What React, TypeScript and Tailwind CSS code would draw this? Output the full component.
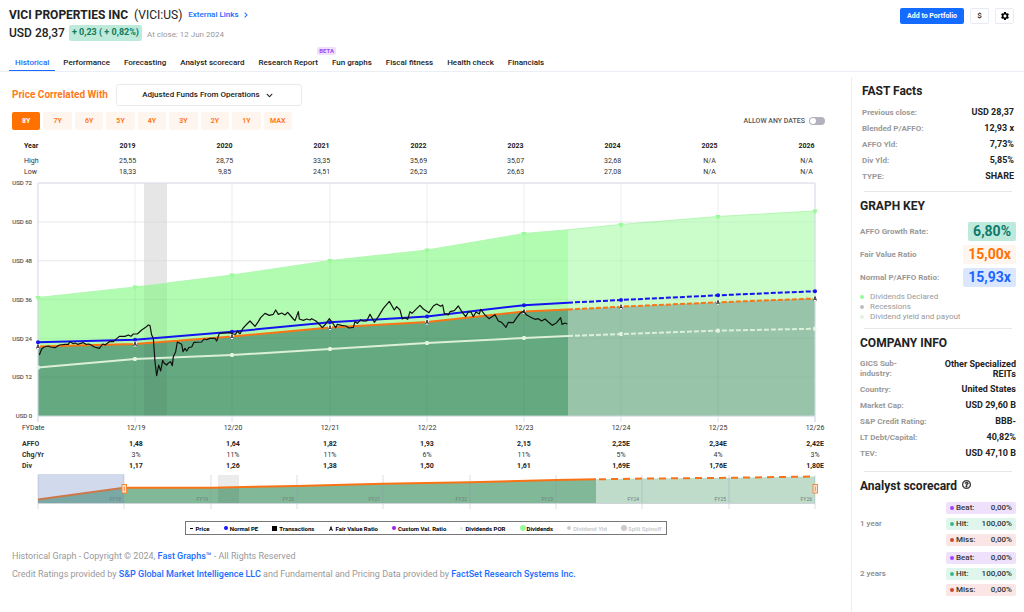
import React, { useState } from 'react';
import { MdSettings } from 'react-icons/md';
import { FaChevronDown, FaChevronRight, FaRegQuestionCircle } from 'react-icons/fa';

const tabs = [
  'Historical',
  'Performance',
  'Forecasting',
  'Analyst scorecard',
  'Research Report',
  'Fun graphs',
  'Fiscal fitness',
  'Health check',
  'Financials',
];

const periods = ['8Y', '7Y', '6Y', '5Y', '4Y', '3Y', '2Y', '1Y', 'MAX'];

const priceTable = [
  { label: 'Year', values: ['2019', '2020', '2021', '2022', '2023', '2024', '2025', '2026'] },
  { label: 'High', values: ['25,55', '28,75', '33,35', '35,69', '35,07', '32,68', 'N/A', 'N/A'] },
  { label: 'Low', values: ['18,33', '9,85', '24,51', '26,23', '26,63', '27,08', 'N/A', 'N/A'] },
];

const fiscalTable = [
  { label: 'FYDate', bold: false, values: ['12/19', '12/20', '12/21', '12/22', '12/23', '12/24', '12/25', '12/26'] },
  { label: 'AFFO', bold: true, values: ['1,48', '1,64', '1,82', '1,93', '2,15', '2,25E', '2,34E', '2,42E'] },
  { label: 'Chg/Yr', bold: false, values: ['3%', '11%', '11%', '6%', '11%', '5%', '4%', '3%'] },
  { label: 'Div', bold: true, values: ['1,17', '1,26', '1,38', '1,50', '1,61', '1,69E', '1,76E', '1,80E'] },
];

const facts = [
  ['Previous close:', 'USD 28,37'],
  ['Blended P/AFFO:', '12,93 x'],
  ['AFFO Yld:', '7,73%'],
  ['Div Yld:', '5,85%'],
  ['TYPE:', 'SHARE'],
];

const companyInfo = [
  ['Country:', 'United States'],
  ['Market Cap:', 'USD 29,60 B'],
  ['S&P Credit Rating:', 'BBB-'],
  ['LT Debt/Capital:', '40,82%'],
  ['TEV:', 'USD 47,10 B'],
];

const graphKey = [
  { label: 'AFFO Growth Rate:', value: '6,80%', style: 'bg-[#bdeadb] text-[#0f7a6c]' },
  { label: 'Fair Value Ratio', value: '15,00x', style: 'bg-[#fff5ef] text-[#ff7200]' },
  { label: 'Normal P/AFFO Ratio:', value: '15,93x', style: 'bg-[#dbe7ff] text-[#1a66ff]' },
];

const keyDots = [
  { label: 'Dividends Declared', dot: 'bg-[#98fb98]' },
  { label: 'Recessions', dot: 'bg-[#bdbdbd]' },
  { label: 'Dividend yield and payout', dot: 'bg-[#e3f3e0]' },
];

const scores = [
  { label: 'Beat:', value: '0,00%', dot: 'bg-[#9b42ff]', bg: 'bg-[#efe1fb]' },
  { label: 'Hit:', value: '100,00%', dot: 'bg-[#37b98b]', bg: 'bg-[#e0f5ec]' },
  { label: 'Miss:', value: '0,00%', dot: 'bg-[#c94a2a]', bg: 'bg-[#f9e6e5]' },
];

// chart geometry, in svg user units
const X = [38, 135, 232, 330, 427, 524, 568, 621, 718, 815];
const dividends = [297.5, 287, 275, 260.5, 250, 233.5, 229.8, 224.5, 216.5, 211];
const normalPe = [342.3, 339.7, 331.7, 322.3, 316.5, 305.2, 302.7, 300, 295.3, 291.2];
const fairValue = [346.5, 344, 336.5, 327.5, 322, 311.5, 309.5, 306.7, 302.3, 298.5];
const payout = [367.5, 359, 355, 349, 343, 338, 336, 334, 330.7, 328.7];
const TODAY = 6;

const price1 =
  '118,660 125,642 132,636 145,633 152,636 165,638 178,630 195,628 205,628 210,620 220,626 225,624 233,628 240,626 250,623 258,628 267,627 275,631 283,636 298,640 308,627 315,630 322,625 330,619 340,620 350,611 358,604 375,604 385,600 393,604 400,597 412,597 425,585 437,577 445,570 450,572 455,600 460,610 465,680 470,722 476,690 482,708 488,676 492,684 500,690 505,684 512,680 517,692 520,665 527,650 532,621 545,628 549,650 555,640 560,648 567,637 575,636 582,622 605,621 612,612 620,614 630,610 645,610 650,618 658,595 690,593 700,597 707,598 712,588 720,597';
const price2 =
  '0,252 8,236 18,225 30,213 45,229 55,215 62,203 75,190 88,196 100,193 107,180 115,193 125,189 135,195 143,187 150,195 160,207 165,212 175,185 178,207 190,211 200,207 210,210 215,206 228,213 240,225 247,233 257,222 268,206 280,222 287,233 292,223 305,226 318,228 327,234 340,232 345,215 352,220 362,209 370,213 380,213 390,193 403,217 415,200 430,175 448,154 463,180 470,170 480,180 487,207 495,203 503,208 510,185 516,190 530,176 540,166 550,177 567,188 580,168 590,162 602,169 608,165 613,190 625,195 630,185 643,182 655,168 665,184 677,200 685,186 693,186 700,200 708,186 718,192 722,178 735,195 747,206 765,194 775,213 785,217 798,232 805,217 820,218 828,206 840,190 850,184 860,195 875,203 885,208 895,206 905,213 915,207 925,216 937,226 950,218 962,203 966,223 975,219 982,222';

const navX = [38, 124, 211, 297, 383, 470, 556, 596, 642, 729, 815];
const navY = [499.5, 487.7, 487.7, 486, 483.8, 482.3, 480, 479.3, 478.6, 477.8, 476.5];
const navTicks = [38, 124, 211, 297, 383, 470, 556, 642, 729, 815];

function line(xs: number[], ys: number[], from: number, to: number) {
  return xs
    .slice(from, to + 1)
    .map((x, i) => `${x},${ys[from + i]}`)
    .join(' ');
}

function area(xs: number[], ys: number[], from: number, to: number, base: number) {
  return `${line(xs, ys, from, to)} ${xs[to]},${base} ${xs[from]},${base}`;
}

function HistoryChart() {
  const years = X.filter((_, i) => i !== TODAY);
  const last = X.length - 1;
  return (
    <svg viewBox="0 177 851 245" className="block w-full" role="img" aria-label="Historical graph">
      {[0, 1, 2, 3, 4, 5, 6].map((i) => (
        <g key={i}>
          <line x1="38" x2="815" y1={416 - i * 38.8} y2={416 - i * 38.8} stroke="#f0f0f0" />
          <text x="32" y={418.2 - i * 38.8} textAnchor="end" fontSize="6" fill="#555" stroke="#555" strokeWidth="0.15">
            USD {i * 12}
          </text>
        </g>
      ))}
      {years.map((x) => (
        <line key={x} x1={x} x2={x} y1="183" y2="416" stroke="#ededf0" />
      ))}
      <rect x="144" y="183" width="23" height="233" fill="#e6e6e6" />

      <polygon points={area(X, dividends, 0, TODAY, 416)} fill="#b1fcb1" />
      <polygon points={area(X, dividends, TODAY, last, 416)} fill="#cbfdcb" />
      <polygon points={area(X, fairValue, 0, TODAY, 416)} fill="#65a981" />
      <polygon points={area(X, fairValue, TODAY, last, 416)} fill="#98c5aa" />
      <polyline points={line(X, dividends, 0, last)} fill="none" stroke="#b4f7b4" />
      <polygon points="144,286 167,283.2 167,416 144,416" fill="#000" opacity="0.05" />
      {[1, 2, 3, 4, 5].map((i) => (
        <line key={i} x1="38" x2="815" y1={416 - i * 38.8} y2={416 - i * 38.8} stroke="#000" opacity="0.03" />
      ))}
      {years.map((x, i) => (
        <line key={x} x1={x} x2={x} y1={[297, 287, 275, 260, 250, 233, 224, 216, 211][i]} y2="416" stroke="#000" opacity="0.04" />
      ))}

      <path d="M38 422V183H815V422" fill="none" stroke="#d9dcec" />
      <path d="M38 416H815" stroke="#c9d6dc" />
      {years.map((x) => (
        <line key={x} x1={x} x2={x} y1="417" y2="422" stroke="#dcdff0" />
      ))}

      <g fill="none" strokeWidth="2">
        <polyline points={line(X, payout, 0, TODAY)} stroke="#dcefd9" />
        <polyline points={line(X, payout, TODAY, last)} stroke="#dcefd9" strokeDasharray="5 2" />
        <polyline points={line(X, fairValue, 0, TODAY)} stroke="#f97516" />
        <polyline points={line(X, fairValue, TODAY, last)} stroke="#f97516" strokeDasharray="5 2" />
        <polyline points={line(X, normalPe, 0, TODAY)} stroke="#1414f0" />
        <polyline points={line(X, normalPe, TODAY, last)} stroke="#1414f0" strokeDasharray="5 2" />
      </g>
      {X.map((x, i) =>
        i === TODAY ? null : (
          <g key={x}>
            <path d={`M${x - 2.5} ${dividends[i] - 1.5}h5l-1.5 4h-2z`} fill="#98fb98" />
            <circle cx={x} cy={normalPe[i]} r="2" fill="#1414f0" />
            <rect x={x - 1.5} y={payout[i] - 2} width="3" height="4" fill="#e6f5e3" />
            <rect x={x - 2} y={fairValue[i] - 2.5} width="4" height="5" rx="1" fill="#fff" opacity="0.9" />
            <path
              d={`M${x - 1.5} ${fairValue[i] + 2}L${x} ${fairValue[i] - 2}L${x + 1.5} ${fairValue[i] + 2}M${x - 1} ${fairValue[i] + 0.8}h2`}
              fill="none"
              stroke="#222"
              strokeWidth="0.9"
            />
          </g>
        ),
      )}
      <g fill="none" stroke="#111" strokeWidth="3.6" strokeLinejoin="round">
        <polyline points={price1} transform="translate(0 135) scale(0.33333)" />
        <polyline points={price2} transform="translate(240 250) scale(0.33333)" />
      </g>
    </svg>
  );
}

function Handle({ x }: { x: number }) {
  return (
    <g>
      <rect x={x - 2} y="484.5" width="4.5" height="8.5" fill="#ffe3cc" stroke="#f58a3c" />
      <path d={`M${x + 0.3} 486.5v4.5`} stroke="#f58a3c" />
    </g>
  );
}

function Navigator() {
  return (
    <svg viewBox="0 473 851 36" className="block w-full" role="img" aria-label="Range navigator">
      <rect x="218" y="475" width="21" height="28" fill="#ebebeb" />
      <polygon points={area(navX, navY, 0, 7, 503)} fill="#81b898" />
      <polygon points={area(navX, navY, 7, 10, 503)} fill="#bfdccb" />
      <rect x="218" y="487" width="21" height="16" fill="#000" opacity="0.07" />
      {navTicks.map((x) => (
        <line key={x} x1={x} x2={x} y1="475" y2="509" stroke="#8f8fb0" opacity="0.3" />
      ))}
      <line x1="38" x2="815" y1="503.5" y2="503.5" stroke="#cfd3da" />
      {navTicks.slice(1).map((x, i) => (
        <text key={x} x={x - 3} y="500.7" textAnchor="end" fontSize="5" fill="#6f7f78">
          FY{18 + i}
        </text>
      ))}
      <polyline points={line(navX, navY, 0, 7)} fill="none" stroke="#f97316" strokeWidth="2" />
      <polyline points={line(navX, navY, 7, 10)} fill="none" stroke="#f97316" strokeWidth="2" strokeDasharray="7 5" strokeDashoffset="-3" />
      <rect x="38" y="474" width="86" height="29" fill="#6685c2" opacity="0.3" />
      <Handle x={124} />
      <Handle x={815} />
    </svg>
  );
}

function Legend() {
  return (
    <ul className="mx-auto mt-3 flex h-[14px] w-[482px] items-center justify-between border border-[#777] px-1 text-[6px] font-bold text-black">
      <li className="flex items-center gap-[3px]"><span className="h-px w-[3px] bg-black" />Price</li>
      <li className="flex items-center gap-[2px]"><span className="size-1 rounded-full bg-[#1414ff]" />Normal PE</li>
      <li className="flex items-center gap-[2px]"><span className="size-[5px] bg-black" />Transactions</li>
      <li className="flex items-center gap-[3px]">
        <svg viewBox="0 0 6 8" className="h-[5px] w-1" fill="none" stroke="#000" strokeWidth="1.4"><path d="M.7 8L3 1L5.3 8M1.5 5.5H4.5" /></svg>
        Fair Value Ratio
      </li>
      <li className="flex items-center gap-[2px]"><span className="size-1 rounded-full bg-[#a21cf0]" />Custom Val. Ratio</li>
      <li className="flex items-center gap-[2px]"><span className="size-[3px] rounded-full bg-[#d9efd6]" />Dividends POR</li>
      <li className="flex items-center gap-px"><span className="size-[6px] rounded-full bg-[#98fb98]" />Dividends</li>
      <li className="flex items-center gap-[2px] text-[#ccc]"><span className="size-1 rounded-full bg-[#ccc]" />Dividend Yld</li>
      <li className="flex items-center gap-px text-[#ccc]"><span className="size-[6px] rounded-full bg-[#ccc]" />Split Spinoff</li>
    </ul>
  );
}

function InfoRow({ label, value }: { label: string; value: string }) {
  return (
    <div className="flex h-4 items-center justify-between font-bold">
      <dt className="text-[#999]">{label}</dt>
      <dd className="text-[9px] text-[#222]">{value}</dd>
    </div>
  );
}

export default function App() {
  const [tab, setTab] = useState('Historical');
  const [period, setPeriod] = useState('8Y');

  return (
    <div className="flex min-h-screen flex-col bg-white font-['Roboto',sans-serif] text-[#222]">
      {/* Header */}
      <header className="border-b border-[#eceef6]">
        <div className="flex items-start justify-between pt-[7px] pr-[10px] pl-[9px]">
          <div>
            <div className="flex h-4 items-center">
              <h1 className="text-[12px] font-bold">VICI PROPERTIES INC</h1>
              <span className="ml-[6px] text-[12px]">(VICI:US)</span>
              <a href="#links" className="ml-[6px] flex items-center gap-1 text-[8px] font-medium text-[#1a6bff]">
                External Links <FaChevronRight className="size-[6px]" />
              </a>
            </div>
            <div className="mt-[2px] flex h-4 items-center">
              <span className="text-[12px] font-medium">USD 28,37</span>
              <span className="ml-1 flex h-4 items-center rounded-[2px] bg-[#bdeadb] px-[3px] text-[9px] font-bold text-[#0f7a5c]">
                + 0,23 ( + 0,82%)
              </span>
              <span className="ml-[5px] pt-1 text-[8px] text-[#999]">At close: 12 Jun 2024</span>
            </div>
          </div>
          <div className="mt-px flex gap-[6px]">
            <button className="h-4 rounded-[2px] bg-[#146bff] px-[7px] text-[7px] font-bold text-white">Add to Portfolio</button>
            <button aria-label="Currency" className="h-4 w-[19px] rounded-[2px] border border-[#e8eaf4] text-[8px] font-medium">$</button>
            <button aria-label="Settings" className="flex h-4 w-[19px] items-center justify-center rounded-[2px] border border-[#e8eaf4] text-black">
              <MdSettings className="size-[10px]" />
            </button>
          </div>
        </div>
        <nav className="mt-[14px] flex gap-[2px] pl-[9px]">
          {tabs.map((t) => (
            <button
              key={t}
              onClick={() => setTab(t)}
              className={`relative h-4 border-b px-[6px] text-[8px] font-medium ${
                t === tab ? 'border-[#1a6bff] text-[#1a6bff]' : 'border-transparent'
              }`}
            >
              {t}
              {t === 'Research Report' && (
                <span className="absolute -top-2 -right-3 rounded-[2px] bg-[#efe0fc] px-[2px] text-[6px] leading-[8px] font-bold text-[#a24bf5]">
                  BETA
                </span>
              )}
            </button>
          ))}
        </nav>
      </header>

      <div className="flex flex-1">
        {/* Graph */}
        <main className="min-w-0 flex-1 pt-2">
          <div className="flex h-[29px] items-center gap-2 pl-3">
            <label htmlFor="metric" className="text-[10px] font-bold text-[#ff7a1a]">Price Correlated With</label>
            <div className="relative">
              <select
                id="metric"
                className="block h-[22px] w-[186px] appearance-none rounded-[3px] border border-[#e8eaf0] bg-white pr-4 text-center text-[8px] font-medium"
              >
                <option>Adjusted Funds From Operations</option>
              </select>
              <FaChevronDown className="pointer-events-none absolute top-2 right-[29px] size-[7px]" />
            </div>
          </div>
          <div className="mt-[3px] flex items-center justify-between pr-[26px] pl-3">
            <div className="grid w-[280px] grid-cols-9 gap-[3px]">
              {periods.map((p) => (
                <button
                  key={p}
                  onClick={() => setPeriod(p)}
                  className={`h-[18px] rounded-[2px] text-[7px] font-bold ${
                    p === period ? 'bg-[#ff7200] text-white' : 'bg-[#fff5ef] text-[#ff7a1a]'
                  }`}
                >
                  {p}
                </button>
              ))}
            </div>
            <label className="flex items-center gap-1 text-[7px] font-medium text-[#555]">
              ALLOW ANY DATES
              <input
                type="checkbox"
                className="flex h-2 w-4 appearance-none items-center rounded-full bg-[#b3b1bd] px-px before:size-[6px] before:rounded-full before:bg-white checked:justify-end"
              />
            </label>
          </div>

          <div className="mt-[11px] pr-9 pl-6">
            <table className="w-full table-fixed text-[7px] leading-[10px] text-[#333]">
              <colgroup>
                <col className="w-[15px]" />
              </colgroup>
              <tbody>
                {priceTable.map((row, i) => (
                  <tr key={row.label} className={i === 0 ? 'h-[14px] align-top font-bold text-[#222]' : 'h-[11px]'}>
                    <th scope="row" className={`text-left whitespace-nowrap ${i === 0 ? 'font-bold' : 'font-normal'}`}>{row.label}</th>
                    {row.values.map((v, j) => (
                      <td key={j} className="text-right">
                        <span className="inline-block w-[17px] text-center whitespace-nowrap">{v}</span>
                      </td>
                    ))}
                  </tr>
                ))}
              </tbody>
            </table>
          </div>

          <HistoryChart />

          <div className="mt-px pr-[26px] pl-[22px]">
            <table className="w-full table-fixed text-[7px] leading-[10px] text-[#333]">
              <colgroup>
                <col className="w-[27px]" />
              </colgroup>
              <tbody>
                {fiscalTable.map((row, i) => (
                  <tr key={row.label} className={i === 0 ? 'h-[15px] align-top' : 'h-[11px]'}>
                    <th scope="row" className={`text-left whitespace-nowrap ${i === 0 ? 'font-normal' : 'font-bold'}`}>{row.label}</th>
                    {row.values.map((v, j) => (
                      <td key={j} className={`text-right ${row.bold ? 'font-bold text-[#222]' : ''}`}>
                        <span className="inline-block w-5 text-center whitespace-nowrap">{v}</span>
                      </td>
                    ))}
                  </tr>
                ))}
              </tbody>
            </table>
          </div>

          <div className="mt-[2px]">
            <Navigator />
          </div>
          <Legend />

          <footer className="mt-3 pl-3 text-[9px] leading-[18px] text-[#999]">
            <p>
              Historical Graph - Copyright © 2024, <a href="#fg" className="font-medium text-[#1a6bff]">Fast Graphs™</a> - All Rights Reserved
            </p>
            <p>
              Credit Ratings provided by <a href="#sp" className="font-medium text-[#1a6bff]">S&amp;P Global Market Intelligence LLC</a> and
              Fundamental and Pricing Data provided by <a href="#fs" className="font-medium text-[#1a6bff]">FactSet Research Systems Inc.</a>
            </p>
          </footer>
        </main>

        {/* Sidebar */}
        <aside className="mt-[5px] w-[173px] shrink-0 border-l border-[#eceef2] px-2 text-[8px]">
          <section className="px-[2px] pt-[6px]">
            <h2 className="text-[12px] leading-4 font-bold">FAST Facts</h2>
            <dl className="mt-[6px]">
              {facts.map(([label, value]) => <InfoRow key={label} label={label} value={value} />)}
            </dl>
          </section>
          <hr className="mx-1 mt-[6px] border-[#e6e6e6]" />

          <section className="pt-[6px]">
            <h2 className="text-[12px] leading-4 font-bold">GRAPH KEY</h2>
            <dl className="mt-2 grid gap-[4px]">
              {graphKey.map((k) => (
                <div key={k.label} className="flex items-center justify-between">
                  <dt className="font-bold text-[#999]">{k.label}</dt>
                  <dd className={`flex h-[19px] items-center rounded-[2px] px-[5px] text-[14px] font-bold ${k.style}`}>{k.value}</dd>
                </div>
              ))}
            </dl>
            <ul className="mt-[5px] leading-[10px] text-[#999]">
              {keyDots.map((k) => (
                <li key={k.label} className="flex items-center gap-[6px]">
                  <span className={`size-1 rounded-full ${k.dot}`} />
                  {k.label}
                </li>
              ))}
            </ul>
          </section>
          <hr className="mx-1 mt-[6px] border-[#e6e6e6]" />

          <section className="pt-[6px]">
            <h2 className="text-[12px] leading-4 font-bold">COMPANY INFO</h2>
            <dl className="mt-2">
              <div className="mb-[3px] flex justify-between leading-[10px] font-bold">
                <dt className="w-[50px] text-[#999]">GICS Sub-industry:</dt>
                <dd className="w-[80px] text-right text-[9px] text-[#222]">Other Specialized REITs</dd>
              </div>
              {companyInfo.map(([label, value]) => <InfoRow key={label} label={label} value={value} />)}
            </dl>
          </section>
          <hr className="mx-1 mt-[9px] border-[#e6e6e6]" />

          <section className="pt-[6px]">
            <h2 className="flex items-center gap-[5px] text-[12px] leading-4 font-bold">
              Analyst scorecard <FaRegQuestionCircle className="mb-1 size-[9px] text-[#333]" stroke="#333" strokeWidth="30" />
            </h2>
            <div className="mt-2 grid gap-[6px]">
              {['1 year', '2 years'].map((year) => (
                <div key={year} className="flex items-center justify-between">
                  <span className="font-medium text-[#888]">{year}</span>
                  <ul className="grid w-[70px] gap-1">
                    {scores.map((s) => (
                      <li key={s.label} className={`flex h-3 items-center rounded-[2px] px-1 font-medium text-[#333] ${s.bg}`}>
                        <span className={`mr-[2px] size-1 rounded-full ${s.dot}`} />
                        {s.label}
                        <span className="ml-auto">{s.value}</span>
                      </li>
                    ))}
                  </ul>
                </div>
              ))}
            </div>
          </section>
        </aside>
      </div>
    </div>
  );
}
